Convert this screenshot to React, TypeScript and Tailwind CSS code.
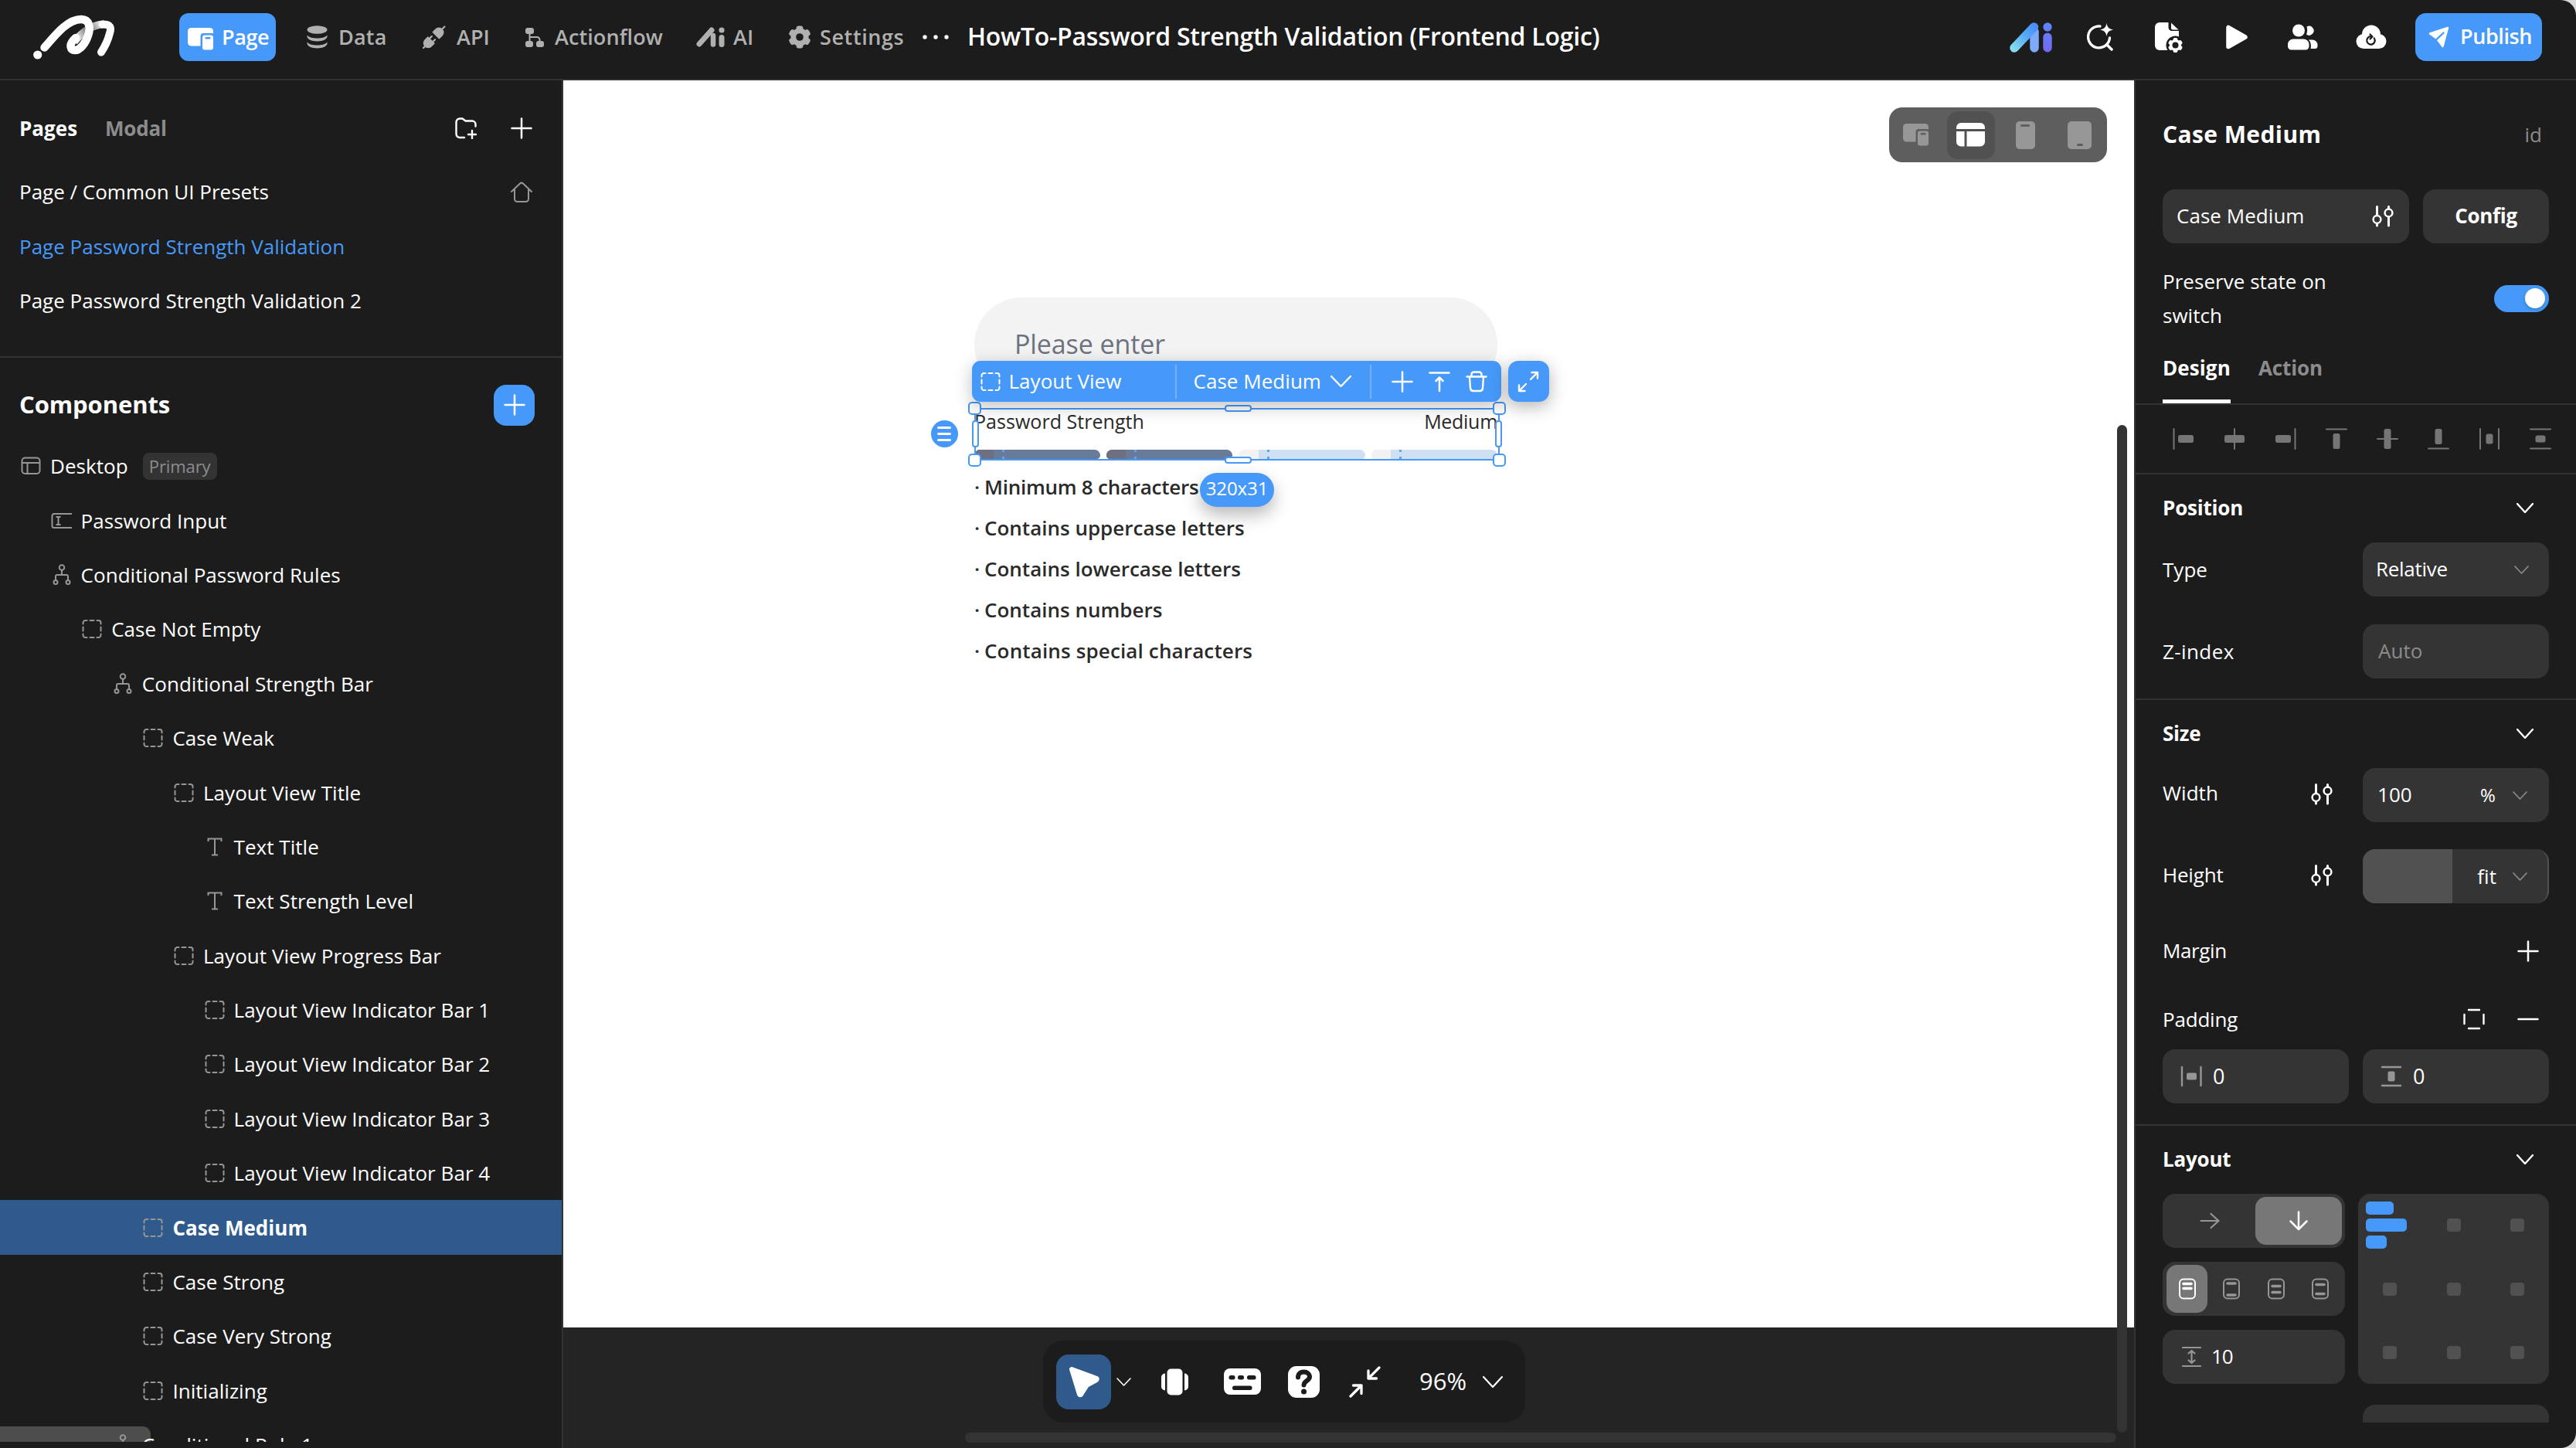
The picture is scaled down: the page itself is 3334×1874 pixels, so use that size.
import React from "react";

type Kids = { children?: React.ReactNode; className?: string };

/* ---------- shared icons ---------- */

const Svg = ({ w, h, children, className = "" }: { w: number; h: number } & Kids) => (
  <svg width={w} height={h} viewBox={`0 0 ${w} ${h}`} fill="none" className={`block shrink-0 ${className}`}>
    {children}
  </svg>
);

const Line = ({ d, w = 2.6, c = "currentColor" }: { d: string; w?: number; c?: string }) => (
  <path d={d} stroke={c} strokeWidth={w} strokeLinecap="round" strokeLinejoin="round" />
);

const Plus = () => (
  <Svg w={28} h={28}>
    <Line d="M14 1.5V26.5M1.5 14H26.5" w={2.5} />
  </Svg>
);

const Chevron = ({ w = 22, h = 12, s = 2 }: { w?: number; h?: number; s?: number }) => (
  <Svg w={w} h={h}>
    <Line d={`M1 1L${w / 2} ${h - 1}L${w - 1} 1`} w={s} />
  </Svg>
);

const Sliders = () => (
  <Svg w={28} h={28}>
    <Line d="M6.5 1.5V12.5M6.5 23.5V26M21.5 1.5V4.5M21.5 15V26" w={3} />
    <circle cx="6.5" cy="18" r="4.9" stroke="currentColor" strokeWidth="2.5" />
    <circle cx="21.5" cy="9.5" r="4.9" stroke="currentColor" strokeWidth="2.5" />
  </Svg>
);

const DashedBox = ({ c = "#969696" }: { c?: string }) => (
  <Svg w={28} h={28}>
    <path
      d="M2.5 7.5V6A3 3 0 0 1 5.5 3H7.5M11.5 3H16.5M20.5 3H22.5A3 3 0 0 1 25.5 6V7.5M25.5 11.5V16.5M25.5 20.5V22A3 3 0 0 1 22.5 25H20.5M16.5 25H11.5M7.5 25H5.5A3 3 0 0 1 2.5 22V20.5M2.5 16.5V11.5"
      stroke={c}
      strokeWidth="2"
      strokeLinecap="round"
    />
  </Svg>
);

const Gear = ({ cx, cy, r, hole, fill, bg }: { cx: number; cy: number; r: number; hole: number; fill: string; bg: string }) => (
  <g>
    <circle cx={cx} cy={cy} r={r * 0.8} fill={fill} />
    {[0, 60, 120].map((a) => (
      <rect key={a} x={cx - r * 0.3} y={cy - r} width={r * 0.6} height={r * 2} rx={r * 0.2} fill={fill} transform={`rotate(${a} ${cx} ${cy})`} />
    ))}
    <circle cx={cx} cy={cy} r={hole} fill={bg} />
  </g>
);

/* ---------- header ---------- */

const Logo = () => (
  <svg width="112" height="102" viewBox="40 0 112 102" fill="none" className="block shrink-0">
    <defs>
      <linearGradient id="fold" x1="98" y1="54" x2="136" y2="30" gradientUnits="userSpaceOnUse">
        <stop offset="0" stopColor="#fff" />
        <stop offset="0.15" stopColor="#ddd" />
        <stop offset="0.5" stopColor="#6e6e6e" />
        <stop offset="0.95" stopColor="#fff" />
      </linearGradient>
    </defs>
    <path d="M96 54C106 42 120 31.500 134 31.500" stroke="url(#fold)" strokeWidth="10" />
    <path d="M133 31.500C144 31 144 37 142 43C140 51 136 60 131 67.500" stroke="#fff" strokeWidth="10" strokeLinecap="round" />
    <path d="M57.500 61.500C69 49 86 25 105 25C116 25 117.500 36 114 46C110.500 57 103 65 97 65C91 65 89.500 58.500 94.500 52.500L98 49" stroke="#fff" strokeWidth="10.500" strokeLinecap="round" />
    <circle cx="48.700" cy="71" r="5.600" fill="#fff" />
  </svg>
);

const DevicesIcon = ({ c, bg }: { c: string; bg: string }) => (
  <Svg w={34} h={29}>
    <rect x="0" y="0" width="33" height="23.500" rx="4.500" fill={c} />
    <rect x="16.500" y="7" width="19" height="24" rx="4" fill={bg} />
    <rect x="19" y="9.500" width="14" height="19" rx="3" fill={c} />
    <rect x="22.500" y="12" width="7" height="2.500" rx="1" fill={bg} />
  </Svg>
);

const DataIcon = () => (
  <Svg w={27} h={30}>
    <g fill="#b0b0b0">
      <ellipse cx="13.500" cy="5.500" rx="13" ry="5.300" />
      <path d="M.5 12.500C3 15.500 8 16.500 13.500 16.500S24 15.500 26.500 12.500C27.500 18 21 20.500 13.500 20.500S-.5 18 .5 12.500Z" />
      <path d="M.5 21.500C3 24.500 8 25.500 13.500 25.500S24 24.500 26.500 21.500C27.500 27 21 29.500 13.500 29.500S-.5 27 .5 21.500Z" />
    </g>
  </Svg>
);

const ApiIcon = () => (
  <Svg w={30} h={30}>
    <g fill="#b0b0b0" transform="rotate(45 15 15)">
      <path d="M9.500 11.500V6.500A5.500 5.500 0 0 1 20.500 6.500V11.500Z" strokeLinejoin="round" stroke="#b0b0b0" strokeWidth="2" />
      <path d="M9.500 21V26A5.500 5.500 0 0 0 20.500 26V21Z" strokeLinejoin="round" stroke="#b0b0b0" strokeWidth="2" />
      <path d="M15 2V-4M15 30V35M12 21V16.500M18 21V16.500" stroke="#b0b0b0" strokeWidth="2.200" strokeLinecap="round" />
    </g>
  </Svg>
);

const FlowIcon = () => (
  <Svg w={24} h={25}>
    <g fill="#b0b0b0">
      <rect x="0" y="0" width="11" height="8" rx="3" />
      <rect x="0" y="17" width="10" height="8" rx="3" />
      <rect x="14" y="17" width="10" height="8" rx="3" />
    </g>
    <path d="M5.500 7V18M5.500 12H15A3.500 3.500 0 0 1 18.500 15.500V18" stroke="#b0b0b0" strokeWidth="2" />
  </Svg>
);

const AiGray = () => (
  <Svg w={37} h={26}>
    <path d="M4 22L20 4" stroke="#b0b0b0" strokeWidth="7" strokeLinecap="round" />
    <path d="M22 11V22.500" stroke="#b0b0b0" strokeWidth="6.500" strokeLinecap="round" />
    <circle cx="33" cy="4" r="3.600" fill="#b0b0b0" />
    <path d="M33 13.500V22.500" stroke="#b0b0b0" strokeWidth="7" strokeLinecap="round" />
  </Svg>
);

const AiLogo = () => (
  <Svg w={55} h={39}>
    <defs>
      <linearGradient id="aiA" x1="4" y1="34" x2="34" y2="5" gradientUnits="userSpaceOnUse">
        <stop offset="0" stopColor="#85dcf2" />
        <stop offset="0.55" stopColor="#55aaf5" />
        <stop offset="1" stopColor="#4b8df8" />
      </linearGradient>
      <linearGradient id="aiI" x1="0" y1="0" x2="0" y2="39" gradientUnits="userSpaceOnUse">
        <stop offset="0" stopColor="#5c86f9" />
        <stop offset="1" stopColor="#7468f2" />
      </linearGradient>
    </defs>
    <path d="M32 12V33" stroke="#7faaf9" strokeWidth="11.500" strokeLinecap="round" />
    <path d="M6 33L31.500 6" stroke="url(#aiA)" strokeWidth="11.500" strokeLinecap="round" />
    <circle cx="49" cy="6" r="5.700" fill="url(#aiI)" />
    <rect x="43.300" y="13.500" width="11.400" height="25" rx="5.700" fill="url(#aiI)" />
  </Svg>
);

const SearchSpark = () => (
  <Svg w={34} h={36}>
    <path d="M17 4A14 14 0 1 0 29.500 19" stroke="#fff" strokeWidth="3.300" strokeLinecap="round" />
    <path d="M26 28L32 34" stroke="#fff" strokeWidth="3.500" strokeLinecap="round" />
    <path d="M25.500 0C26.500 5.500 28.500 7.500 34 8.500C28.500 9.500 26.500 11.500 25.500 17C24.500 11.500 22.500 9.500 17 8.500C22.500 7.500 24.500 5.500 25.500 0Z" fill="#fff" />
  </Svg>
);

const DocGear = () => (
  <Svg w={36} h={39}>
    <path d="M6 0H17.500V6.500A4.500 4.500 0 0 0 22 11H31V36H6A6 6 0 0 1 0 30V6A6 6 0 0 1 6 0Z" fill="#fff" />
    <path d="M21 .5L30.500 9.500H23A2 2 0 0 1 21 7.500Z" fill="#fff" />
    <circle cx="26.500" cy="29.500" r="12" fill="#1c1c1c" />
    <Gear cx={26.500} cy={29.500} r={9.500} hole={4} fill="#fff" bg="#1c1c1c" />
  </Svg>
);

const PlayIcon = () => (
  <Svg w={28} h={32}>
    <path d="M3 3.500V28.500L25 16Z" fill="#fff" stroke="#fff" strokeWidth="5.500" strokeLinejoin="round" />
  </Svg>
);

const UsersIcon = () => (
  <Svg w={39} h={34}>
    <g fill="#fff">
      <circle cx="14" cy="8.500" r="8" />
      <path d="M7 19.500H20.500A7 7 0 0 1 27.500 26.500V29A4.500 4.500 0 0 1 23 33.500H4.500A4.500 4.500 0 0 1 0 29V26.500A7 7 0 0 1 7 19.500Z" />
      <path d="M24.500 3.500A6 6 0 1 1 24 13.500C25.500 10.500 25.500 6.500 24.500 3.500Z" />
      <path d="M27 20.500H32A6.500 6.500 0 0 1 38.500 27V28.500A3.500 3.500 0 0 1 35 32H29.500C30.500 28 30 23.500 27 20.500Z" />
    </g>
  </Svg>
);

const CloudIcon = () => (
  <Svg w={40} h={32}>
    <g fill="#fff">
      <circle cx="20" cy="12.500" r="12" />
      <circle cx="10" cy="21.500" r="9.500" />
      <circle cx="30" cy="21.500" r="9.500" />
      <rect x="10" y="18" width="20" height="13" />
    </g>
    <path d="M23.800 17.500A5.200 5.200 0 1 1 19 15.200M18.500 12.500L21.500 15.500L18.500 18.500" stroke="#1c1c1c" strokeWidth="2.200" strokeLinecap="round" strokeLinejoin="round" />
  </Svg>
);

const PlaneIcon = () => (
  <Svg w={27} h={28}>
    <path d="M25 2L2 9.500L11 16L18.500 26Z" fill="#fff" stroke="#fff" strokeWidth="2.500" strokeLinejoin="round" />
    <path d="M10.500 17L19.500 8.500" stroke="#4699f8" strokeWidth="2.400" strokeLinecap="round" />
  </Svg>
);

const NavItem = ({ icon, children, className = "" }: { icon: React.ReactNode } & Kids) => (
  <div className={`flex shrink-0 items-center font-[560] text-[#b0b0b0] ${className}`}>
    {icon}
    <span className="relative -top-px">{children}</span>
  </div>
);

const Header = () => (
  <header className="flex h-[104px] shrink-0 items-center border-b-2 border-[#333] pb-[6px] pl-[40px] pr-[44px] text-[27px]">
    <div className="-mb-[6px]">
      <Logo />
    </div>
    <div className="ml-[80px] flex h-[62px] w-[125px] shrink-0 items-center gap-[10px] rounded-[12px] bg-[#4699f8] pl-[11px] font-semibold text-white">
      <div className="pt-[4px]">
        <DevicesIcon c="#fff" bg="#4699f8" />
      </div>
      <span className="relative -top-px tracking-[-0.4px]">Page</span>
    </div>
    <NavItem icon={<DataIcon />} className="ml-[40px] w-[103px] gap-[14px] tracking-[0.2px]">Data</NavItem>
    <NavItem icon={<ApiIcon />} className="ml-[47px] w-[86px] gap-[14px]">API</NavItem>
    <NavItem icon={<FlowIcon />} className="ml-[47px] w-[176px] gap-[14px] tracking-[0.1px]">Actionflow</NavItem>
    <NavItem icon={<AiGray />} className="ml-[45px] w-[72px] gap-[11px]">AI</NavItem>
    <NavItem
      icon={
        <Svg w={30} h={30}>
          <Gear cx={15} cy={15} r={14.500} hole={4.800} fill="#b0b0b0" bg="#1c1c1c" />
        </Svg>
      }
      className="ml-[47px] w-[149px] gap-[11px] tracking-[0.6px]"
    >
      Settings
    </NavItem>
    <Svg w={34} h={6} className="ml-[25px]">
      <circle cx="3" cy="3" r="2.700" fill="#fff" />
      <circle cx="17" cy="3" r="2.700" fill="#fff" />
      <circle cx="31" cy="3" r="2.700" fill="#fff" />
    </Svg>
    <h1 className="relative -top-px ml-[24px] whitespace-nowrap text-[32px] font-[580] tracking-[-0.25px] text-white">
      HowTo-Password Strength Validation (Frontend Logic)
    </h1>
    <div className="ml-auto flex items-center">
      <AiLogo />
      <div className="ml-[45px]"><SearchSpark /></div>
      <div className="ml-[54px]"><DocGear /></div>
      <div className="ml-[56px]"><PlayIcon /></div>
      <div className="ml-[52px]"><UsersIcon /></div>
      <div className="ml-[49px]"><CloudIcon /></div>
      <div className="ml-[37px] flex h-[62px] w-[164px] items-center gap-[14px] rounded-[14px] bg-[#4699f8] pl-[17px] font-semibold tracking-[-0.4px] text-white">
        <PlaneIcon />
        <span className="relative -top-[2px]">Publish</span>
      </div>
    </div>
  </header>
);

/* ---------- left sidebar ---------- */

const TreeGlyph = () => (
  <Svg w={28} h={28}>
    <g stroke="#969696" strokeWidth="2">
      <circle cx="14" cy="4.500" r="3.300" />
      <circle cx="6" cy="23.500" r="2.500" />
      <circle cx="22" cy="23.500" r="2.500" />
      <path d="M14 8V14M6 21V16A2 2 0 0 1 8 14H20A2 2 0 0 1 22 16V21" />
    </g>
  </Svg>
);

const TextGlyph = () => (
  <Svg w={28} h={28}>
    <path d="M5.500 7V3.500H22.500V7M14 3.500V24.500M10 24.500H18" stroke="#969696" strokeWidth="2" />
  </Svg>
);

const DesktopGlyph = () => (
  <Svg w={28} h={28}>
    <rect x="2.500" y="3.500" width="23" height="20.500" rx="4" stroke="#969696" strokeWidth="2" />
    <path d="M2.500 10H25.500M9.500 10V24" stroke="#969696" strokeWidth="2" />
  </Svg>
);

const InputGlyph = () => (
  <Svg w={28} h={28}>
    <path d="M27 5H4A2.500 2.500 0 0 0 1.500 7.500V20.500A2.500 2.500 0 0 0 4 23H27" stroke="#969696" strokeWidth="2" />
    <path d="M6.500 9H12.500M6.500 19H12.500M9.500 9V19" stroke="#969696" strokeWidth="2" />
  </Svg>
);

const glyphs = { box: <DashedBox />, tree: <TreeGlyph />, text: <TextGlyph />, desktop: <DesktopGlyph />, input: <InputGlyph /> };

const nodes: { label: string; level: number; icon: keyof typeof glyphs; active?: boolean; badge?: string }[] = [
  { label: "Desktop", level: 0, icon: "desktop", badge: "Primary" },
  { label: "Password Input", level: 1, icon: "input" },
  { label: "Conditional Password Rules", level: 1, icon: "tree" },
  { label: "Case Not Empty", level: 2, icon: "box" },
  { label: "Conditional Strength Bar", level: 3, icon: "tree" },
  { label: "Case Weak", level: 4, icon: "box" },
  { label: "Layout View Title", level: 5, icon: "box" },
  { label: "Text Title", level: 6, icon: "text" },
  { label: "Text Strength Level", level: 6, icon: "text" },
  { label: "Layout View Progress Bar", level: 5, icon: "box" },
  { label: "Layout View Indicator Bar 1", level: 6, icon: "box" },
  { label: "Layout View Indicator Bar 2", level: 6, icon: "box" },
  { label: "Layout View Indicator Bar 3", level: 6, icon: "box" },
  { label: "Layout View Indicator Bar 4", level: 6, icon: "box" },
  { label: "Case Medium", level: 4, icon: "box", active: true },
  { label: "Case Strong", level: 4, icon: "box" },
  { label: "Case Very Strong", level: 4, icon: "box" },
  { label: "Initializing", level: 4, icon: "box" },
  { label: "Conditional Rule 1", level: 3, icon: "tree" },
];

const Sidebar = () => (
  <aside className="flex w-[729px] shrink-0 flex-col border-r-2 border-[#333]">
    <div className="flex h-[124px] items-center pl-[25px] pr-[38px] font-bold">
      <span className="w-[111px]">Pages</span>
      <span className="tracking-[-0.2px] text-[#8c8c8c]">Modal</span>
      <div className="ml-auto flex items-center gap-[43px]">
        <Svg w={29} h={28}>
          <Line d="M12 26H6A4.500 4.500 0 0 1 1.500 21.500V6A4.500 4.500 0 0 1 6 1.500H9.500L13.500 4.500H22A4.500 4.500 0 0 1 26.500 9V11.500M22 17V27M17 22H27" w={2.400} />
        </Svg>
        <Plus />
      </div>
    </div>
    <div className="flex h-[235px] flex-col border-b-2 border-[#333] tracking-normal">
      <div className="-mt-[14px] flex h-[70.400px] items-center justify-between pl-[25px] pr-[37px]">
        <span className="relative -top-px">Page / Common UI Presets</span>
        <Svg w={30} h={28} className="text-[#969696]">
          <Line d="M2 13L13 2.500A3 3 0 0 1 17 2.500L28 13M6 10V22.500A3.500 3.500 0 0 0 9.500 26H20.500A3.500 3.500 0 0 0 24 22.500V10" w={2} />
        </Svg>
      </div>
      <div className="flex h-[70.400px] items-center pb-px pl-[25px] text-[#4699f8]">Page Password Strength Validation</div>
      <div className="flex h-[70.400px] items-center pb-px pl-[25px]">Page Password Strength Validation 2</div>
    </div>
    <div className="flex h-[105px] items-center justify-between pl-[25px] pr-[35px] pt-[17px]">
      <span className="relative -top-px text-[31px] font-bold tracking-[-0.1px]">Components</span>
      <div className="flex size-[53px] items-center justify-center rounded-[16px] bg-[#4699f8]">
        <Plus />
      </div>
    </div>
    <div className="relative h-[1298px] overflow-hidden">
      <div className="absolute bottom-0 left-0 h-[20px] w-[195px] rounded-tr-[10px] bg-[#4d4d4d]" />
      {nodes.map((n) => (
        <div
          key={n.label}
          style={{ paddingLeft: 26 + n.level * 39.6 }}
          className={`relative flex h-[70.400px] items-center gap-[11px] whitespace-nowrap ${n.active ? "bg-[#2f5a8b] font-bold" : ""}`}
        >
          {glyphs[n.icon]}
          <span>{n.label}</span>
          {n.badge && (
            <span className="ml-[8px] flex h-[35px] w-[96px] items-center justify-center rounded-[8px] bg-[#333] pb-px text-[22px] tracking-[-0.1px] text-[#8c8c8c]">
              {n.badge}
            </span>
          )}
        </div>
      ))}
    </div>
  </aside>
);

/* ---------- canvas ---------- */

const rules = ["Minimum 8 characters", "Contains uppercase letters", "Contains lowercase letters", "Contains numbers", "Contains special characters"];

const Bar = ({ on }: { on: boolean }) => (
  <div className={`flex h-[12px] flex-1 overflow-hidden rounded-[8px] rounded-b-[5px] ${on ? "bg-[#687b98]" : "bg-[#cfe0f3]"}`}>
    <div className={`h-full w-[25px] ${on ? "bg-[#6c7080]" : "bg-[#f2f2f2]"}`} />
    <div className="ml-[11px] flex h-full w-[3px] flex-col justify-between">
      <i className="h-[3px] bg-[#5fa4ec]" />
      <i className="h-[3px] bg-[#5fa4ec]" />
    </div>
  </div>
);

const handle = "absolute border-[2.500px] border-[#4699f8] bg-white";

const Canvas = () => (
  <div className="relative h-[1614px] overflow-hidden bg-white text-[#2a2a2a]">
    {/* designed page */}
    <div className="absolute left-[532px] top-[281px] w-[677px]">
      <div className="flex h-[122px] items-center rounded-[61px] bg-[#f3f3f3] pb-[2px] pl-[52px] text-[34px] tracking-[-0.1px] text-[#6b7280]">Please enter</div>
      <div className="mt-[22px] flex h-[65px] flex-col justify-between">
        <div className="flex h-[32px] items-center justify-between text-[25px]">
          <span className="tracking-[0.040px]">Password Strength</span>
          <span className="tracking-[-0.3px]">Medium</span>
        </div>
        <div className="flex gap-[8.500px]">
          <Bar on />
          <Bar on />
          <Bar on={false} />
          <Bar on={false} />
        </div>
      </div>
      <ul className="mt-[10px] text-[26px] font-[620] leading-[53px]">
        {rules.map((r, i) => (
          <li key={r} className="flex">
            <span className="w-[13px]">·</span>
            <span className={i === 0 ? "tracking-[-0.25px]" : i === 4 ? "tracking-[0.14px]" : "tracking-normal"}>{r}</span>
          </li>
        ))}
      </ul>
    </div>

    {/* selection frame */}
    <div className="absolute left-[531.500px] top-[424px] h-[68px] w-[680px] border-[2.500px] border-[#4699f8]">
      <i className={`${handle} -left-[10px] -top-[10px] size-[17px] rounded-[5px]`} />
      <i className={`${handle} -right-[10px] -top-[10px] size-[17px] rounded-[5px]`} />
      <i className={`${handle} -bottom-[10px] -left-[10px] size-[17px] rounded-[5px]`} />
      <i className={`${handle} -bottom-[10px] -right-[10px] size-[17px] rounded-[5px]`} />
      <i className={`${handle} -top-[6px] left-[322px] h-[9px] w-[35px] rounded-[4px]`} />
      <i className={`${handle} -bottom-[6px] left-[322px] h-[9px] w-[35px] rounded-[4px]`} />
      <i className={`${handle} -left-[5px] top-[14px] h-[35px] w-[9px] rounded-[4px]`} />
      <i className={`${handle} -right-[5px] top-[14px] h-[35px] w-[9px] rounded-[4px]`} />
    </div>

    {/* floating action bar */}
    <div className="absolute left-[528.500px] top-[363px] flex gap-[9px] text-white">
      <div className="flex h-[53px] w-[685px] items-center rounded-[11px] bg-[#4699f8] pl-[10px] shadow-[0_6px_22px_rgba(0,0,0,0.25)]">
        <DashedBox c="#fff" />
        <span className="relative -top-px ml-[10px] w-[215px] text-[26px]">Layout View</span>
        <i className="h-[44px] w-[2px] bg-[#74b2fa]" />
        <span className="relative -top-px ml-[22px] w-[177px] text-[26px]">Case Medium</span>
        <Chevron w={27} h={15} s={2.300} />
        <i className="ml-[24px] h-[44px] w-[2px] bg-[#74b2fa]" />
        <div className="ml-[26px] flex gap-[20px]">
          <Plus />
          <Svg w={28} h={28}>
            <Line d="M1.500 2.500H26.500M14 26V9M9.500 13L14 8.500L18.500 13" w={2.500} />
          </Svg>
          <Svg w={28} h={28}>
            <Line d="M1.500 7.500H26.500M7.500 7V4.500A3 3 0 0 1 10.500 1.500H17.500A3 3 0 0 1 20.500 4.500V7M5 8L6 22.500A4 4 0 0 0 10 26H18A4 4 0 0 0 22 22.500L23 8" w={2.400} />
          </Svg>
        </div>
      </div>
      <div className="flex h-[53px] w-[53px] items-center justify-center rounded-[13px] bg-[#4699f8] shadow-[0_6px_22px_rgba(0,0,0,0.3)]">
        <Svg w={28} h={28}>
          <Line d="M17 11L26 2M18.500 2H26V9.500M11 17L2 26M2 18.500V26H9.500" w={2.400} />
        </Svg>
      </div>
    </div>

    {/* drag grip */}
    <div className="absolute left-[475.500px] top-[440px] flex size-[35px] flex-col items-center justify-center gap-[5px] rounded-full bg-[#4699f8]">
      <i className="h-[3px] w-[18px] rounded-full bg-white" />
      <i className="h-[3px] w-[18px] rounded-full bg-white" />
      <i className="h-[3px] w-[18px] rounded-full bg-white" />
    </div>

    {/* size badge */}
    <div className="absolute left-[824px] top-[508px] flex h-[44px] w-[96px] items-center justify-center rounded-[22px] bg-[#4699f8] pb-[4px] text-[24px] tracking-[-0.1px] text-white shadow-[0_10px_22px_rgba(0,0,0,0.28)]">
      320x31
    </div>

    {/* breakpoint switcher */}
    <div className="absolute right-[35px] top-[35px] grid h-[71px] w-[282px] grid-cols-4 items-center justify-items-center rounded-[17px] bg-[#5e5e5e]">
      <DevicesIcon c="#979797" bg="#5e5e5e" />
      <div className="flex size-[62px] items-center justify-center rounded-[14px] bg-[#515151]">
        <Svg w={37} h={31}>
          <path d="M6 0H31A6 6 0 0 1 37 6V8H0V6A6 6 0 0 1 6 0ZM0 11H10.500V30.500H6A6 6 0 0 1 0 24.500ZM13.500 11H37V24.500A6 6 0 0 1 31 30.500H13.500Z" fill="#fff" />
        </Svg>
      </div>
      <div className="flex h-[36px] w-[25px] justify-center rounded-[5px] bg-[#979797] pt-[4px]">
        <i className="h-[3px] w-[12px] rounded-full bg-[#5e5e5e]" />
      </div>
      <div className="flex h-[36px] w-[31px] items-end justify-center rounded-[5px] bg-[#979797] pb-[4px]">
        <i className="h-[3px] w-[8px] rounded-full bg-[#5e5e5e]" />
      </div>
    </div>
  </div>
);

const Center = () => (
  <main className="relative flex w-[2033px] shrink-0 flex-col bg-[#242424]">
    <Canvas />
    <div className="ml-[621px] mt-[17px] flex h-[106px] w-[624px] items-center rounded-[26px] bg-[#1c1c1c] pl-[17px]">
      <div className="flex size-[71px] items-center justify-center rounded-[16px] bg-[#2f5a8b] pl-[2px]">
        <Svg w={41} h={41}>
          <path d="M4 4L36.500 16C37 16.500 36.500 17.500 36 18L24 24.500L16 37C15.500 37.500 14.500 37.500 14 36.500Z" fill="#fff" stroke="#fff" strokeWidth="6" strokeLinejoin="round" />
        </Svg>
      </div>
      <div className="ml-[7px]"><Chevron w={19} h={11} s={1.600} /></div>
      <Svg w={35} h={35} className="ml-[39px]">
        <rect x="7.500" y=".5" width="20" height="34" rx="5" fill="#fff" />
        <path d="M5 6.500V28.500A5 5 0 0 1 0 23.500V11.500A5 5 0 0 1 5 6.500ZM30 6.500V28.500A5 5 0 0 0 35 23.500V11.500A5 5 0 0 0 30 6.500Z" fill="#fff" />
      </Svg>
      <Svg w={48} h={34} className="ml-[46px]">
        <rect width="48" height="34" rx="8" fill="#fff" />
        <g fill="#1c1c1c">
          <rect x="6.500" y="9" width="8" height="5.500" rx="2.500" />
          <rect x="18" y="9" width="8" height="5.500" rx="2.500" />
          <rect x="30" y="9" width="11.500" height="5.500" rx="2.500" />
          <rect x="11" y="22.500" width="25.500" height="5.500" rx="2.500" />
        </g>
      </Svg>
      <Svg w={41} h={41} className="ml-[35px]">
        <rect width="41" height="41" rx="11" fill="#fff" />
        <path d="M13 14.500C13 9.500 16.500 7.500 20.500 7.500S28 10 28 14C28 19 20.500 19 20.500 24.500" stroke="#1c1c1c" strokeWidth="6" strokeLinecap="round" />
        <circle cx="20.500" cy="33" r="3.500" fill="#1c1c1c" />
      </Svg>
      <Svg w={41} h={41} className="ml-[38px]">
        <Line d="M39 2L25 16M25 6V16H35.500M2 39L16 25M5.500 25H16V35.500" w={3.300} />
      </Svg>
      <span className="relative -top-px ml-[50px] w-[82px] text-[31px]">96%</span>
      <Chevron w={26} h={15} s={2.200} />
    </div>
    <div className="ml-[520px] mt-[13px] h-[13px] w-[1490px] rounded-[7px] bg-[#333]" />
    <div className="absolute right-[9px] top-[446px] h-[1304px] w-[13px] rounded-[7px] bg-[#333]" />
  </main>
);

/* ---------- inspector ---------- */

const Rule = () => <div className="h-[2px] shrink-0 bg-[#333]" />;

const Section = ({ title, children, className = "" }: { title: string } & Kids) => (
  <section className={`px-[35px] ${className}`}>
    <div className="mb-[2px] flex h-[86px] items-center justify-between pr-[20px]">
      <span className="font-bold tracking-[-0.2px]">{title}</span>
      <Chevron w={22} h={13} s={2.400} />
    </div>
    {children}
  </section>
);

const field = "flex h-[70px] items-center rounded-[16px] bg-[#343434]";

const AlignIcon = ({ lines, x, y, w, h }: { lines: string; x: number; y: number; w: number; h: number }) => (
  <Svg w={28} h={28}>
    <rect x={x} y={y} width={w} height={h} rx="2.500" fill="#757575" />
    <path d={lines} stroke="#757575" strokeWidth="2" strokeLinecap="round" />
  </Svg>
);

const Distribution = ({ a, b, c = "#969696" }: { a: number; b: number; c?: string }) => (
  <Svg w={24} h={28}>
    <rect x="2" y="1.500" width="20" height="25" rx="5" stroke={c} strokeWidth="2" />
    <path d={`M7 ${a}H17M7 ${b}H17`} stroke={c} strokeWidth="3.600" strokeLinecap="round" />
  </Svg>
);

const Inspector = () => (
  <aside className="flex w-[572px] shrink-0 flex-col border-l-2 border-[#333]">
    <div className="flex h-[141px] items-center justify-between pb-[2px] pl-[35px] pr-[44px]">
      <span className="text-[30px] font-bold tracking-[0.4px]">Case Medium</span>
      <span className="text-[#8c8c8c]">id</span>
    </div>
    <div className="flex gap-[18px] px-[35px]">
      <div className={`${field} w-[319px] justify-between pl-[18px] pr-[20px]`}>
        <span className="relative -top-px">Case Medium</span>
        <Sliders />
      </div>
      <div className={`${field} flex-1 justify-center pb-[2px] font-bold tracking-[-0.3px]`}>Config</div>
    </div>
    <div className="mt-[27px] flex items-center justify-between px-[35px] leading-[44px]">
      <div className="w-[240px]">Preserve state on switch</div>
      <div className="flex h-[35px] w-[71px] items-center justify-end rounded-full bg-[#4699f8] pr-[5px]">
        <div className="size-[26px] rounded-full bg-white shadow-[0_2px_4px_rgba(0,35,11,0.2)]" />
      </div>
    </div>
    <div className="flex h-[92px] items-stretch gap-[36px] pl-[35px] font-bold">
      <div className="flex w-[88px] items-center border-b-[5px] border-white pt-[4px] tracking-[0.1px]">Design</div>
      <div className="flex items-center pb-px tracking-[-0.15px] text-[#8c8c8c]">Action</div>
    </div>
    <Rule />
    <div className="flex h-[88px] shrink-0 items-center gap-[38px] pl-[48px]">
      <AlignIcon lines="M1.500 1V27" x={7} y={9} w={20} h={10} />
      <AlignIcon lines="M14 1V27" x={1} y={9} w={26} h={10} />
      <AlignIcon lines="M26.500 1V27" x={1} y={9} w={20} h={10} />
      <AlignIcon lines="M1 1.500H27" x={9.500} y={7} w={9} h={20} />
      <AlignIcon lines="M1 14H27" x={9.500} y={1} w={9} h={26} />
      <AlignIcon lines="M1 26.500H27" x={9.500} y={1} w={9} h={20} />
      <AlignIcon lines="M2 1V27M26 1V27" x={9.500} y={7.500} w={9} h={13} />
      <AlignIcon lines="M1 1.500H27M1 26.500H27" x={7.500} y={9.500} w={13} h={9} />
    </div>
    <Rule />
    <Section title="Position" className="pb-[26px]">
      <div className="flex items-center justify-between">
        <span>Type</span>
        <div className={`${field} w-[241px] justify-between pl-[17px] pr-[26px] text-[#8c8c8c]`}>
          <span className="relative -top-px tracking-[-0.3px] text-white">Relative</span>
          <Chevron w={19} h={11} s={1.700} />
        </div>
      </div>
      <div className="mt-[36px] flex items-center justify-between">
        <span className="tracking-[0.4px]">Z-index</span>
        <div className={`${field} w-[241px] pb-[2px] pl-[20px] text-[#8c8c8c]`}>Auto</div>
      </div>
    </Section>
    <Rule />
    <Section title="Size" className="pb-[27px]">
      <div className="flex items-center">
        <span className="pb-[6px]">Width</span>
        <div className="ml-auto mr-[39px] pb-[3px]"><Sliders /></div>
        <div className={`${field} w-[241px] pl-[19px] pr-[28px] text-[#8c8c8c]`}>
          <span className="relative -top-px text-white">100</span>
          <span className="ml-auto mr-[22px] text-[24px] text-white">%</span>
          <Chevron w={19} h={11} s={1.700} />
        </div>
      </div>
      <div className="mt-[35px] flex items-center">
        <span className="pb-[5px] tracking-[-0.2px]">Height</span>
        <div className="ml-auto mr-[39px] pb-[3px]"><Sliders /></div>
        <div className={`${field} w-[241px] overflow-hidden border-r-2 border-[#515151] pr-[26px] text-[#8c8c8c]`}>
          <div className="h-full w-[116px] bg-[#515151]" />
          <span className="ml-auto mr-[21px] text-white">fit</span>
          <Chevron w={19} h={11} s={1.700} />
        </div>
      </div>
      <div className="mt-[20px] flex h-[84px] items-center justify-between pr-[13px]">
        <span className="relative -top-px tracking-[-0.4px]">Margin</span>
        <Plus />
      </div>
      <div className="mt-[6px] flex h-[79px] items-center pr-[13px]">
        <span className="mr-auto tracking-[-0.2px]">Padding</span>
        <Svg w={28} h={28} className="mr-[42px]">
          <Line d="M7 2H21M7 26H21M1.500 8V20M26.500 8V20" w={2.400} />
        </Svg>
        <Svg w={28} h={28}>
          <Line d="M1.500 14H26.500" w={2.500} />
        </Svg>
      </div>
      <div className="flex gap-[18px]">
        <div className={`${field} flex-1 gap-[14px] pl-[23px]`}>
          <Svg w={28} h={28}>
            <rect x="8" y="9.500" width="13" height="9" rx="2" fill="#969696" />
            <path d="M2 2V26M26.500 2V26" stroke="#969696" strokeWidth="2.400" strokeLinecap="round" />
          </Svg>
          <span className="relative -top-px text-[27px]">0</span>
        </div>
        <div className={`${field} flex-1 gap-[14px] pl-[23px]`}>
          <Svg w={28} h={28}>
            <rect x="9.500" y="7.500" width="9" height="13" rx="2" fill="#969696" />
            <path d="M2 2H26M2 26H26" stroke="#969696" strokeWidth="2.400" strokeLinecap="round" />
          </Svg>
          <span className="relative -top-px text-[27px]">0</span>
        </div>
      </div>
    </Section>
    <Rule />
    <Section title="Layout">
      <div className="flex gap-[17px]">
        <div className="flex w-[236px] flex-col gap-[18px]">
          <div className={`${field} p-[4px]`}>
            <div className="flex flex-1 justify-center pr-[2px] text-[#969696]">
              <Svg w={26} h={22}>
                <Line d="M1.500 11H24.500M14.500 2L24.500 11L14.500 20" w={2.200} />
              </Svg>
            </div>
            <div className="flex h-[62px] w-[112px] items-center justify-center rounded-[14px] bg-[#777]">
              <Svg w={24} h={26}>
                <Line d="M12 1.500V24M1.500 13.500L12 24L22.500 13.500" w={2.500} />
              </Svg>
            </div>
          </div>
          <div className={`${field} gap-[4.500px] pl-[5px]`}>
            <div className="flex h-[62px] w-[53px] items-center justify-center rounded-[14px] bg-[#777]">
              <Distribution a={7.500} b={13.500} c="#fff" />
            </div>
            <div className="flex w-[53px] justify-center"><Distribution a={7} b={22} /></div>
            <div className="flex w-[53px] justify-center"><Distribution a={10.500} b={18.500} /></div>
            <div className="flex w-[53px] justify-center"><Distribution a={8.500} b={20.500} /></div>
          </div>
          <div className={`${field} gap-[12px] pl-[24px]`}>
            <Svg w={27} h={28}>
              <Line d="M2 2H25M2 26H25M13.500 6.500V21.500M9.500 9.500L13.500 6L17.500 9.500M9.500 18.500L13.500 22L17.500 18.500" w={2.200} c="#969696" />
            </Svg>
            <span className="relative -top-px tracking-[-1.2px]">10</span>
          </div>
        </div>
        <div className="relative grid h-[246px] flex-1 grid-cols-[18px_18px_18px] content-between justify-between rounded-[16px] bg-[#343434] py-[32px] pl-[32px] pr-[32px]">
          {Array.from({ length: 9 }, (_, i) => (
            <i key={i} className={`h-[17px] rounded-[4px] ${i === 0 ? "bg-transparent" : "bg-[#515151]"}`} />
          ))}
          <div className="absolute left-[10px] top-[10px] flex flex-col gap-[5px]">
            <i className="h-[17px] w-[36px] rounded-[5px] bg-[#4699f8]" />
            <i className="h-[17px] w-[53px] rounded-[5px] bg-[#4699f8]" />
            <i className="h-[17px] w-[27px] rounded-[5px] bg-[#4699f8]" />
          </div>
        </div>
      </div>
      <div className="ml-auto mt-[27px] h-[23px] w-[241px] rounded-t-[16px] bg-[#343434]" />
    </Section>
  </aside>
);

export default function App() {
  return (
    <div className="h-[1874px] w-[3334px] bg-[#d8d8d8]">
      <div className="flex h-full flex-col overflow-hidden rounded-r-[20px] bg-[#1c1c1c] font-['Open_Sans',sans-serif] text-[26px] leading-none tracking-[0.04px] text-white">
        <Header />
        <div className="flex h-[1770px]">
          <Sidebar />
          <Center />
          <Inspector />
        </div>
      </div>
    </div>
  );
}
